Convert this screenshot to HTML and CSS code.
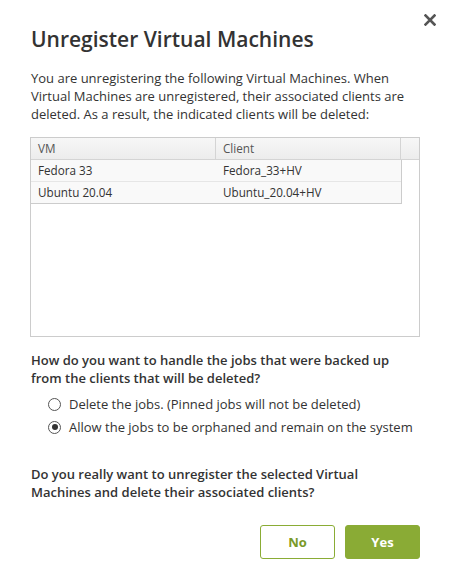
FILE: index.html
```html
<!DOCTYPE html>
<html lang="en">
<head>
<meta charset="UTF-8">
<title>Unregister Virtual Machines</title>
<link rel="stylesheet" href="styles.css">
</head>
<body>
<div class="dialog">
  <button class="close-btn" aria-label="Close">
    <svg width="12" height="12" viewBox="0 0 12 12"><path d="M1.5 1.5 L10.5 10.5 M10.5 1.5 L1.5 10.5" stroke="#555" stroke-width="2.6" stroke-linecap="square"/></svg>
  </button>
  <h1 class="dialog-title">Unregister Virtual Machines</h1>
  <p class="dialog-text">You are unregistering the following Virtual Machines. When Virtual Machines are unregistered, their associated clients are deleted. As a result, the indicated clients will be deleted:</p>

  <div class="grid-box">
    <div class="grid-head">
      <div class="cell cell-vm">VM</div>
      <div class="cell cell-client">Client</div>
      <div class="cell cell-pad"></div>
    </div>
    <div class="grid-rows">
      <div class="grid-row">
        <div class="cell cell-vm">Fedora 33</div>
        <div class="cell cell-client">Fedora_33+HV</div>
      </div>
      <div class="grid-row">
        <div class="cell cell-vm">Ubuntu 20.04</div>
        <div class="cell cell-client">Ubuntu_20.04+HV</div>
      </div>
    </div>
  </div>

  <p class="question">How do you want to handle the jobs that were backed up from the clients that will be deleted?</p>
  <div class="options">
    <label class="option"><span class="radio"></span>Delete the jobs. (Pinned jobs will not be deleted)</label>
    <label class="option"><span class="radio checked"></span>Allow the jobs to be orphaned and remain on the system</label>
  </div>

  <p class="question confirm">Do you really want to unregister the selected Virtual Machines and delete their associated clients?</p>

  <div class="actions">
    <button class="btn btn-no">No</button>
    <button class="btn btn-yes">Yes</button>
  </div>
</div>
</body>
</html>
```

FILE: styles.css
```css
html, body {
margin: 0;
padding: 0;
background: #fff;
}
body {
font-family: "Open Sans", "Liberation Sans", Arial, sans-serif;
color: #333;
font-size: 13px;
}
.dialog {
position: relative;
width: 450px;
height: 586px;
box-sizing: border-box;
padding: 24px 30px 0 31px;
}
.close-btn {
position: absolute;
top: 14px; right: 14px;
width: 12px; height: 12px;
padding: 0; border: none;
background: none;
cursor: pointer;
display: flex;
}
.dialog-title {
margin: 0;
font-size: 21px;
font-weight: 600;
line-height: 30px;
color: #333;
}
.dialog-text {
margin: 15px 0 0 0;
font-size: 13px;
line-height: 18px;
color: #333;
}
.grid-box {
margin-top: 14px;
margin-left: -1px;
height: 200px;
box-sizing: border-box;
border: 1px solid #ccc;
}
.grid-head {
display: flex;
height: 22px;
background: linear-gradient(#f7f7f7, #ececec);
border-bottom: 1px solid #d4d4d4;
box-sizing: border-box;
color: #555;
}
.cell {
box-sizing: border-box;
padding: 0 7px;
line-height: 21px;
font-size: 11.7px;
white-space: nowrap;
}
.cell-vm { width: 185px; }
.cell-client { width: 185px; }
.grid-head .cell-vm,
.grid-head .cell-client { border-right: 1px solid #d4d4d4; }
.cell-pad { flex: 1; }
.grid-rows {
width: 370px;
border-right: 1px solid #ccc;
border-bottom: 1px solid #ccc;
}
.grid-row {
display: flex;
height: 21px;
background: #f9f9f9;
}
.grid-row + .grid-row {
border-top: 1px solid #e6e6e6;
height: 21px;
}
.question {
margin: 14px 0 0 0;
font-weight: 600;
line-height: 18px;
}
.options {
margin-top: 8px;
padding-left: 17px;
display: flex;
flex-direction: column;
gap: 5px;
}
.option {
display: flex;
align-items: center;
gap: 8px;
line-height: 18px;
}
.radio {
width: 11px; height: 11px;
border: 1px solid #555;
border-radius: 50%;
box-sizing: content-box;
position: relative;
}
.radio.checked::after {
content: "";
position: absolute;
left: 2.5px; top: 2.5px;
width: 6px; height: 6px;
border-radius: 50%;
background: #333;
}
.confirm {
margin-top: 29px;
}
.actions {
margin-top: 24px;
display: flex;
justify-content: flex-end;
gap: 10px;
}
.btn {
width: 75px;
height: 34px;
border-radius: 3px;
font-family: inherit;
font-size: 13px;
font-weight: 700;
cursor: pointer;
}
.btn-no {
background: #fff;
border: 1px solid #8aac35;
color: #7a9a28;
}
.btn-yes {
background: #8aab35;
border: 1px solid #8aab35;
color: #fff;
}
```
